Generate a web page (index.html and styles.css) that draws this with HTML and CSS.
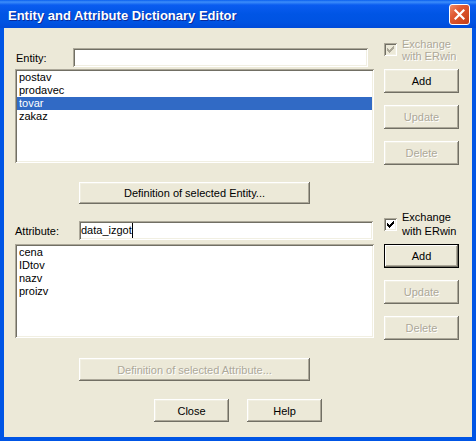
FILE: index.html
```html
<!DOCTYPE html>
<html lang="en">
<head>
    <meta charset="UTF-8">
    <title>Entity and Attribute Dictionary Editor</title>
    <link rel="stylesheet" href="styles.css">
</head>
<body>
    <div class="window">
        <div class="titlebar">
            <span class="title">Entity and Attribute Dictionary Editor</span>
            <button class="close-btn" aria-label="Close">
                <svg width="11" height="11" viewBox="0 0 11 11">
                    <path d="M1.5 1.5 L9.5 9.5 M9.5 1.5 L1.5 9.5" stroke="#fff" stroke-width="2.2" stroke-linecap="square"/>
                </svg>
            </button>
        </div>

        <div class="client">
            <!-- Entity part -->
            <div class="section section-entity">
                <div class="field">
                    <label class="label">Entity:</label>
                    <div class="textbox"></div>
                </div>
                <div class="check disabled">
                    <span class="checkbox">
                        <svg width="13" height="13" viewBox="0 0 13 13" shape-rendering="crispEdges">
                            <path d="M3 5h1v3h-1z M4 6h1v3h-1z M5 7h1v3h-1z M6 6h1v3h-1z M7 5h1v3h-1z M8 4h1v3h-1z M9 3h1v3h-1z"/>
                        </svg>
                    </span>
                    <span class="check-text">Exchange<br>with ERwin</span>
                </div>
                <ul class="listbox">
                    <li>postav</li>
                    <li>prodavec</li>
                    <li class="selected">tovar</li>
                    <li>zakaz</li>
                </ul>
                <div class="buttons">
                    <button class="btn">Add</button>
                    <button class="btn disabled">Update</button>
                    <button class="btn disabled">Delete</button>
                </div>
            </div>

            <div class="def-row def-entity">
                <button class="btn wide">Definition of selected Entity...</button>
            </div>

            <!-- Attribute part -->
            <div class="section section-attr">
                <div class="field">
                    <label class="label">Attribute:</label>
                    <div class="textbox">data_izgot<span class="caret"></span></div>
                </div>
                <div class="check">
                    <span class="checkbox">
                        <svg width="13" height="13" viewBox="0 0 13 13" shape-rendering="crispEdges">
                            <path d="M3 5h1v3h-1z M4 6h1v3h-1z M5 7h1v3h-1z M6 6h1v3h-1z M7 5h1v3h-1z M8 4h1v3h-1z M9 3h1v3h-1z"/>
                        </svg>
                    </span>
                    <span class="check-text">Exchange<br>with ERwin</span>
                </div>
                <ul class="listbox">
                    <li>cena</li>
                    <li>IDtov</li>
                    <li>nazv</li>
                    <li>proizv</li>
                </ul>
                <div class="buttons">
                    <button class="btn default">Add</button>
                    <button class="btn disabled">Update</button>
                    <button class="btn disabled">Delete</button>
                </div>
            </div>

            <div class="def-row def-attr">
                <button class="btn wide disabled">Definition of selected Attribute...</button>
            </div>

            <div class="footer">
                <button class="btn">Close</button>
                <button class="btn">Help</button>
            </div>
        </div>
    </div>
</body>
</html>
```

FILE: styles.css
```css
/* Base */
body {
    margin: 0;
    font-family: "Liberation Sans", Arial, sans-serif;
    font-size: 11px;
    color: #000;
}

.window {
    width: 476px;
    height: 441px;
}

/* Title bar (XP blue) */
.titlebar {
    height: 28px;
    display: flex;
    justify-content: space-between;
    align-items: flex-start;
    background: linear-gradient(to bottom, #0A5FEF 0, #3D8EFA 2px, #0A5CF0 5px, #0055E5 14px, #0053E2 22px, #004BD9 28px);
}

.title {
    padding: 7px 0 0 8px;
    color: #fff;
    font-weight: bold;
    font-size: 13px;
    line-height: 17px;
    text-shadow: 1px 1px 0 #0A2A9A;
}

.close-btn {
    width: 21px;
    height: 21px;
    margin: 4px 6px 0 0;
    padding: 0;
    border: 1px solid #fff;
    border-radius: 3px;
    background: linear-gradient(135deg, #F08C6A 0, #E05A33 35%, #D24A22 70%, #C23D18 100%);
    display: flex;
    align-items: center;
    justify-content: center;
}

/* Client area */
.client {
    height: 413px;
    box-sizing: border-box;
    border: 4px solid #0055E5;
    border-top: none;
    background: #ECE9D8;
    padding-top: 10px;
}

.section {
    display: grid;
    grid-template-columns: 359px 75px;
    grid-template-rows: 31px auto;
    column-gap: 10px;
    margin-left: 11px;
}

.field {
    align-self: end;
    display: flex;
    align-items: center;
    height: 19px;
}

.section-entity .field { margin-bottom: 2px; }
.section-attr .field { margin-bottom: 4px; }

.section-entity .label { width: 57px; padding-left: 1px; }
.section-entity .textbox { width: 295px; }
.section-attr .label { width: 64px; }
.section-attr .textbox { width: 294px; }

.textbox {
    height: 19px;
    box-sizing: border-box;
    padding-left: 2px;
    background: #fff;
    line-height: 19px;
    display: flex;
    align-items: center;
    box-shadow: inset 1px 1px #ACA899, inset -1px -1px #fff, inset 2px 2px #716F64, inset -2px -2px #F1EFE2;
}

.caret {
    display: inline-block;
    width: 0;
    height: 15px;
    border-left: 1px solid #000;
}

/* Checkbox */
.check {
    align-self: start;
    display: flex;
    align-items: flex-start;
    gap: 5px;
}

.section-entity .check { line-height: 12px; }
.section-entity .checkbox { margin-top: 5px; }
.section-attr .check { line-height: 14px; margin-top: -3px; }
.section-attr .checkbox { margin-top: 8px; }

.checkbox {
    width: 13px;
    height: 13px;
    flex: none;
    background: #fff;
    box-shadow: inset 1px 1px #ACA899, inset -1px -1px #fff, inset 2px 2px #716F64, inset -2px -2px #F1EFE2;
}

.checkbox svg { display: block; fill: #000; }

.check.disabled .checkbox { background: #ECE9D8; }
.check.disabled .checkbox svg { fill: #ACA899; }
.check.disabled .check-text {
    color: #ACA899;
    text-shadow: 1px 1px 0 #fff;
}

/* List boxes */
.listbox {
    height: 94px;
    margin: 0;
    padding: 2px;
    list-style: none;
    box-sizing: border-box;
    background: #fff;
    box-shadow: inset 1px 1px #ACA899, inset -1px -1px #fff, inset 2px 2px #716F64, inset -2px -2px #F1EFE2;
}

.listbox li {
    padding-left: 2px;
    line-height: 13px;
    height: 13px;
}

.listbox li.selected {
    background: #316AC5;
    color: #fff;
}

.buttons {
    display: flex;
    flex-direction: column;
    gap: 12px;
}

/* Buttons (classic 3D) */
.btn {
    width: 75px;
    height: 24px;
    padding: 0;
    border: none;
    background: #ECE9D8;
    font-family: "Liberation Sans", Arial, sans-serif;
    font-size: 11px;
    color: #000;
    box-shadow: inset -1px -1px #716F64, inset 1px 1px #fff, inset -2px -2px #ACA899, inset 2px 2px #F1EFE2;
}

.btn.default {
    box-shadow: inset 0 0 0 1px #000, inset -2px -2px #716F64, inset 2px 2px #fff, inset -3px -3px #ACA899;
}

.btn.disabled {
    color: #ACA899;
    text-shadow: 1px 1px 0 #fff;
}

.btn.wide { width: 231px; }

.def-row {
    width: 359px;
    margin-left: 11px;
    display: flex;
    justify-content: center;
}

.def-entity { margin-top: 17px; }
.def-entity .btn { height: 22px; }

.section-attr { margin-top: 9px; }

.def-attr { margin-top: 18px; }
.def-attr .btn { height: 23px; }

.footer {
    margin-top: 18px;
    display: flex;
    justify-content: center;
    gap: 18px;
}

.footer .btn { height: 23px; }
```
